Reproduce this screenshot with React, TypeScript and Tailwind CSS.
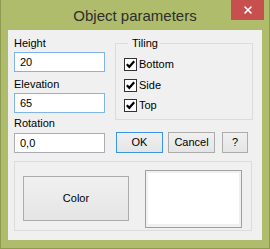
import { X } from "lucide-react";

const font = { fontFamily: '"Liberation Sans", Arial, sans-serif' };

function Check({ label }: { label: string }) {
    return (
        <div className="flex items-center gap-[2px] h-[13px]">
            <span className="w-[13px] h-[13px] border border-[#333333] bg-white flex items-center justify-center">
                <svg width="11" height="11" viewBox="0 0 11 11">
                    <path d="M1.8 5.2 L4.3 7.8 L9.2 2.2" fill="none" stroke="#000" strokeWidth="2.2" />
                </svg>
            </span>
            <span className="text-[11px] leading-[13px] text-black">{label}</span>
        </div>
    );
}

function Field({ value, focused }: { value: string; focused?: boolean }) {
    return (
        <div
            className={`h-[20px] w-[91px] bg-white border flex items-center pl-[5px] text-[11px] text-black ${
                focused ? "border-[#7eb4ea]" : "border-[#abadb3]"
            }`}
        >
            {value}
        </div>
    );
}

function Btn({ children, primary, w }: { children: React.ReactNode; primary?: boolean; w: string }) {
    return (
        <button
            className={`${w} h-[21px] border bg-linear-to-b from-[#f0f0f0] to-[#e5e5e5] text-[11px] text-black flex items-center justify-center ${
                primary ? "border-[#3c94e8]" : "border-[#acacac]"
            }`}
        >
            {children}
        </button>
    );
}

export default function App() {
    return (
        <div style={font} className="w-[270px] h-[249px] bg-[#afbc6b] border-x border-b border-[#8d9a4f] flex flex-col">
            <div className="relative h-[30px] flex items-center justify-center">
                <span className="text-[15px] leading-[17px] text-[#2e2e2e]">Object parameters</span>
                <div className="absolute right-[5px] top-0 w-[33px] h-[20px] bg-[#c7504f] flex items-center justify-center">
                    <X size={12} strokeWidth={3.2} color="#ffffff" />
                </div>
            </div>

            <div className="mx-[7px] h-[210px] bg-[#f0f0f0] px-[6px] pt-[7px]">
                <div className="flex">
                    <div className="w-[91px] flex flex-col">
                        <span className="text-[11px] leading-[13px]">Height</span>
                        <div className="mt-[2px]"><Field value="20" focused /></div>
                        <span className="mt-[6px] text-[11px] leading-[13px]">Elevation</span>
                        <div className="mt-[2px]"><Field value="65" focused /></div>
                        <span className="mt-[4px] text-[11px] leading-[13px]">Rotation</span>
                        <div className="mt-[3px]"><Field value="0,0" /></div>
                    </div>

                    <div className="ml-[10px] w-[138px] flex flex-col">
                        <fieldset className="border border-[#dcdcdc] pl-[8px] pb-[7px]">
                            <legend className="ml-[4px] pl-[4px] pr-[2px] text-[11px] leading-[13px]">Tiling</legend>
                            <div className="mt-[8px] flex flex-col">
                                <Check label="Bottom" />
                                <div className="mt-[8px]"><Check label="Side" /></div>
                                <div className="mt-[7px]"><Check label="Top" /></div>
                            </div>
                        </fieldset>
                        <div className="mt-[12px] ml-[1px] flex">
                            <Btn primary w="w-[47px]">OK</Btn>
                            <div className="ml-[5px]"><Btn w="w-[47px]">Cancel</Btn></div>
                            <div className="ml-[7px]"><Btn w="w-[26px]">?</Btn></div>
                        </div>
                    </div>
                </div>

                <div className="mt-[8px] w-[238px] h-[70px] border border-[#dcdcdc] flex items-start pl-[8px]">
                    <div className="mt-[14px]">
                        <Btn w="w-[106px] !h-[45px]">Color</Btn>
                    </div>
                    <div className="ml-[16px] mt-[8px] w-[97px] h-[58px] border border-[#a0a0a0] p-[2px] pb-[3px]">
                        <div className="w-full h-full bg-white" />
                    </div>
                </div>
            </div>
        </div>
    );
}
